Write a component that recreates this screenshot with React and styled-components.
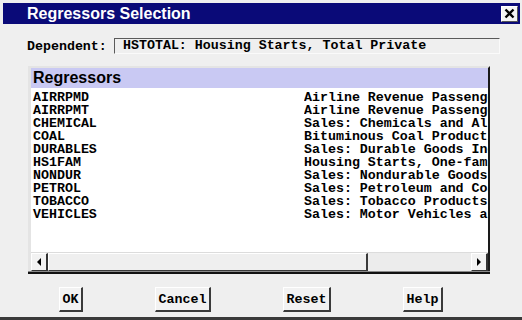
import React from 'react';
import styled, { createGlobalStyle } from 'styled-components';

const GlobalStyle = createGlobalStyle`
  html, body {
    margin: 0;
    padding: 0;
    background: #eeeeee;
  }
`;

const ScWindow = styled.div`
  width: 522px;
  height: 320px;
  box-sizing: border-box;
  padding: 3px 2px 0 3px;
  background: #efefef;
  border-bottom: 3px solid #3a3a3a;
  display: flex;
  flex-direction: column;
  font-family: 'Liberation Mono', 'DejaVu Sans Mono', monospace;
  font-weight: bold;
  font-size: 13.3px;
  color: #000;
`;

const ScTitleBar = styled.div`
  height: 21px;
  background: #0a0a78;
  display: flex;
  align-items: center;
  justify-content: space-between;
  padding: 0 2px 0 24px;
`;

const ScTitle = styled.span`
  font-family: 'Liberation Sans', Arial, sans-serif;
  font-weight: bold;
  font-size: 16px;
  color: #fff;
`;

const ScClose = styled.div`
  width: 17px;
  height: 16px;
  box-sizing: border-box;
  background: #f4f4f4;
  border: 1px solid #fff;
  border-right-color: #555;
  border-bottom-color: #555;
  display: flex;
  align-items: center;
  justify-content: center;
`;

const ScDependentRow = styled.div`
  display: flex;
  align-items: center;
  margin: 14px 20px 0 24px;
  height: 16px;
`;

const ScLabel = styled.span`
  width: 87px;
  flex-shrink: 0;
`;

const ScField = styled.div`
  flex: 1;
  height: 16px;
  box-sizing: border-box;
  border-top: 1px solid #5a5a5a;
  border-left: 1px solid #5a5a5a;
  border-bottom: 1px solid #fafafa;
  border-right: 1px solid #fafafa;
  padding-left: 8px;
  line-height: 14px;
  white-space: nowrap;
  overflow: hidden;
`;

const ScListFrame = styled.div`
  margin: 12px 0 0 25px;
  width: 462px;
  height: 205px;
  box-sizing: border-box;
  border-left: 3px solid #e4e4e4;
  border-top: 2px solid #e4e4e4;
  border-right: 2px solid #1a1a1a;
  box-shadow: 0 1px 0 #8a8a8a, 0 3px 0 #111;
  display: flex;
  flex-direction: column;
  background: #fff;
`;

const ScHeader = styled.div`
  height: 20px;
  flex-shrink: 0;
  background: #c9c9f3;
  font-family: 'Liberation Sans', Arial, sans-serif;
  font-size: 16px;
  line-height: 20px;
  padding-left: 2px;
`;

const ScRows = styled.div`
  flex: 1;
  padding-top: 3px;
  overflow: hidden;
`;

const ScRow = styled.div`
  display: flex;
  height: 13px;
  line-height: 13px;
  padding-left: 2px;
  white-space: nowrap;
`;

const ScName = styled.span`
  width: 271px;
  flex-shrink: 0;
`;

const ScDesc = styled.span`
  overflow: hidden;
  width: 184px;
`;

const ScScrollBar = styled.div`
  height: 18px;
  flex-shrink: 0;
  display: flex;
  background: #ececec;
  border-top: 1px solid #dcdcdc;
`;

const ScArrow = styled.div`
  width: 17px;
  height: 18px;
  box-sizing: border-box;
  background: #f2f2f2;
  border: 1px solid #fff;
  border-right: 2px solid #333;
  border-bottom: 1px solid #333;
  display: flex;
  align-items: center;
  justify-content: center;
`;

const ScTrack = styled.div`
  flex: 1;
  display: flex;
`;

const ScThumb = styled.div`
  width: 320px;
  height: 18px;
  box-sizing: border-box;
  background: #efefef;
  border: 1px solid #fff;
  border-right: 2px solid #3a3a3a;
  border-bottom: 1px solid #3a3a3a;
`;

const ScButtons = styled.div`
  display: flex;
  gap: 72px;
  padding-left: 56px;
  margin-top: 16px;
`;

const ScButton = styled.button`
  width: ${({ w }) => w}px;
  height: 25px;
  padding: 0;
  margin: 0;
  box-sizing: border-box;
  background: #f2f2f2;
  border: 1px solid #fff;
  border-right: 2px solid #3a3a3a;
  border-bottom: 2px solid #3a3a3a;
  font-family: 'Liberation Mono', 'DejaVu Sans Mono', monospace;
  font-weight: bold;
  font-size: 13.3px;
  color: #000;
`;

const regressors = [
  ['AIRRPMD', 'Airline Revenue Passenger Miles, Domestic'],
  ['AIRRPMT', 'Airline Revenue Passenger Miles, Total'],
  ['CHEMICAL', 'Sales: Chemicals and Allied Products'],
  ['COAL', 'Bituminous Coal Production'],
  ['DURABLES', 'Sales: Durable Goods Industries'],
  ['HS1FAM', 'Housing Starts, One-family'],
  ['NONDUR', 'Sales: Nondurable Goods Industries'],
  ['PETROL', 'Sales: Petroleum and Coal Products'],
  ['TOBACCO', 'Sales: Tobacco Products'],
  ['VEHICLES', 'Sales: Motor Vehicles and Parts'],
];

const buttons = [
  ['OK', 24],
  ['Cancel', 56],
  ['Reset', 48],
  ['Help', 40],
];

const App = () => {
  return (
    <>
      <GlobalStyle />
      <ScWindow>
        <ScTitleBar>
          <ScTitle>Regressors Selection</ScTitle>
          <ScClose>
            <svg width='11' height='11' viewBox='0 0 11 11'>
              <path d='M1.5 1.5 L9.5 9.5 M9.5 1.5 L1.5 9.5' stroke='#000' strokeWidth='2.4' />
            </svg>
          </ScClose>
        </ScTitleBar>

        <ScDependentRow>
          <ScLabel>Dependent:</ScLabel>
          <ScField>HSTOTAL: Housing Starts, Total Private</ScField>
        </ScDependentRow>

        <ScListFrame>
          <ScHeader>Regressors</ScHeader>
          <ScRows>
            {regressors.map(([name, desc]) => (
              <ScRow key={name}>
                <ScName>{name}</ScName>
                <ScDesc>{desc}</ScDesc>
              </ScRow>
            ))}
          </ScRows>
          <ScScrollBar>
            <ScArrow>
              <svg width='4' height='8' viewBox='0 0 4 8'>
                <path d='M4 0 L0 4 L4 8 Z' fill='#000' />
              </svg>
            </ScArrow>
            <ScTrack>
              <ScThumb />
            </ScTrack>
            <ScArrow>
              <svg width='4' height='8' viewBox='0 0 4 8'>
                <path d='M0 0 L4 4 L0 8 Z' fill='#000' />
              </svg>
            </ScArrow>
          </ScScrollBar>
        </ScListFrame>

        <ScButtons>
          {buttons.map(([label, w]) => (
            <ScButton key={label} w={w}>
              {label}
            </ScButton>
          ))}
        </ScButtons>
      </ScWindow>
    </>
  );
};

export default App;
